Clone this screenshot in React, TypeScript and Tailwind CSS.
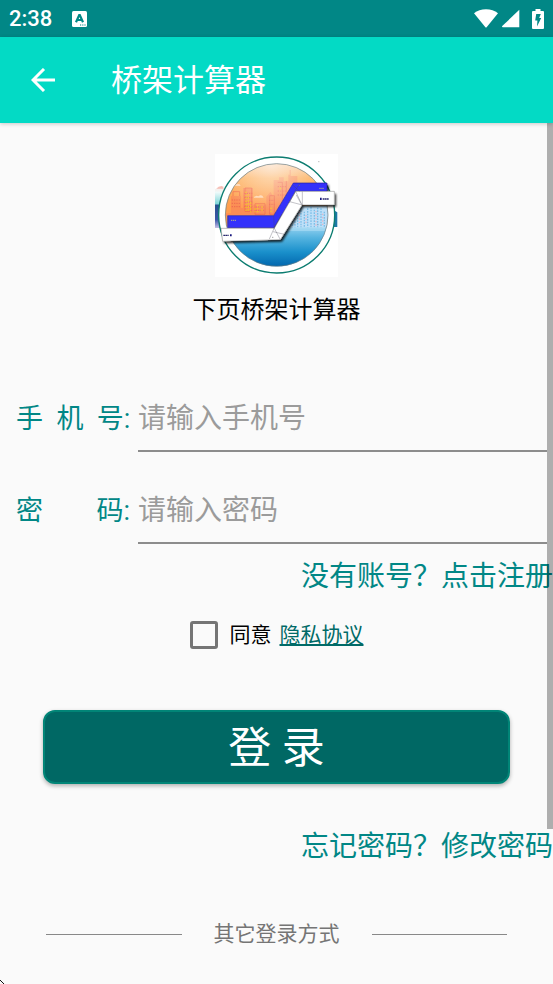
import type { ReactNode } from "react";

type FieldProps = {
  id: string;
  label: string;
  type: string;
  placeholder: string;
};

type TextLinkProps = {
  children: ReactNode;
};

function StatusBar() {
  return (
    <div className="flex h-[37px] items-center bg-[#018786] px-[9px] text-white">
      <span className="text-[22px] leading-none font-medium">2:38</span>
      <svg viewBox="0 0 15 16" className="ml-5 h-4 w-[15px]" aria-hidden="true">
        <rect width="15" height="16" rx="1.5" fill="#fff" />
        <path
          d="M4 11.2 7.2 4h.6l3.2 7.2M5.4 9h4.2"
          fill="none"
          stroke="#018786"
          strokeWidth="2.2"
        />
        <path d="M8 13.6h1.2v1H8zM10.2 13.6h1.2v1h-1.2zM12.4 13.6h1.2v1h-1.2z" fill="#018786" />
      </svg>
      <div className="ml-auto flex items-center">
        <svg viewBox="0 0 24 19" className="h-[19px] w-6" fill="#fff" aria-hidden="true">
          <path d="M0 4.2C3.2 1.6 7.4.3 12 .3s8.8 1.3 12 3.9L12.6 18.2a.8.8 0 0 1-1.2 0Z" />
        </svg>
        <svg viewBox="0 0 18 19" className="ml-1 h-[19px] w-[18px]" fill="#fff" aria-hidden="true">
          <path d="M17.3.8v17.5H.8q-.8 0-.8-1z" />
        </svg>
        <svg viewBox="0 0 12 20" className="ml-3 h-5 w-3" aria-hidden="true">
          <path
            d="M3.5 0h5v2H11a1 1 0 0 1 1 1v16a1 1 0 0 1-1 1H1a1 1 0 0 1-1-1V3a1 1 0 0 1 1-1h2.5z"
            fill="#fff"
          />
          <path d="M4.2 5h4.600L7.200 9h2L5 17.500 5.400 11.500H3.200z" fill="#018786" />
        </svg>
      </div>
    </div>
  );
}

function AppLogo() {
  return (
    <svg viewBox="30 27 369 369" className="h-[123px] w-[123px]" role="img" aria-label="下页桥架计算器">
      <defs>
        <linearGradient id="sky" x1="0" y1="0" x2="0" y2="1">
          <stop offset="0" stopColor="#fbd3b0" />
          <stop offset="0.14" stopColor="#fdb568" />
          <stop offset="0.4" stopColor="#ffa050" />
          <stop offset="0.61" stopColor="#ff9a4a" />
          <stop offset="0.63" stopColor="#8accee" />
          <stop offset="0.72" stopColor="#55b4e0" />
          <stop offset="0.86" stopColor="#1a90cb" />
          <stop offset="1" stopColor="#0267ae" />
        </linearGradient>
        <radialGradient id="shine" cx="0.45" cy="0.02" r="0.5">
          <stop offset="0" stopColor="#fff" stopOpacity="0.55" />
          <stop offset="1" stopColor="#fff" stopOpacity="0" />
        </radialGradient>
        <linearGradient id="edge" x1="0" y1="0" x2="0" y2="1">
          <stop offset="0" stopColor="#f8d8d0" stopOpacity="0.4" />
          <stop offset="0.15" stopColor="#eefafa" />
          <stop offset="0.42" stopColor="#7fd6d8" />
          <stop offset="0.46" stopColor="#28508f" />
          <stop offset="0.8" stopColor="#3a55a8" />
          <stop offset="1" stopColor="#c4bfe6" />
        </linearGradient>
        <clipPath id="disc">
          <circle cx="215" cy="210" r="154" />
        </clipPath>
        <filter id="drop" x="-10%" y="-10%" width="125%" height="130%">
          <feDropShadow dx="5" dy="6" stdDeviation="3" floodOpacity="0.85" />
        </filter>
      </defs>

      <rect x="30" y="27" width="369" height="369" fill="#fff" />

      {/* skyline that shows past the ring on both sides */}
      <path d="M30 132l28-9-8 126H30z" fill="url(#edge)" />
      <path d="M34 131q6-9 18-8l4 8z" fill="#f3a79b" opacity="0.7" />
      <path d="M386 196l11 6v44h-13z" fill="#1d78a5" />
      <circle cx="215" cy="210" r="174" fill="#fff" stroke="#0b7c70" strokeWidth="4" />

      <circle cx="215" cy="210" r="154" fill="url(#sky)" />
      <g clipPath="url(#disc)">
        <path
          d="M62 205h16v-52h30v36h6v-60h30v50h40v-24l12-14 10 14v-50h16v-8h14v12h14v-20h4V75h3v18h20v30h12v90H62z"
          fill="#f87c5a"
          opacity="0.5"
        />
        <path
          d="M84 153V140h20v13M120 129h20v70h-20zM194 152h14v56h-14zM218 112h14v80M244 108v50M150 176h30v32h-30z"
          fill="none"
          stroke="#ee5f48"
          strokeWidth="3"
          opacity="0.6"
        />
        <path
          d="M80 165h26M80 175h26M80 185h26M118 145h24M118 158h24M118 171h24M118 184h24M152 186h26M152 196h26M192 166h16M192 178h16M218 125h26M218 138h26M218 150h26"
          stroke="#e95d4e"
          strokeWidth="3"
          strokeDasharray="4 3"
          opacity="0.7"
        />
        <path
          d="M123 140v62M130 148v54M137 172v30M150 190v12M158 180v22M171 184v16M198 188v14M226 128v10"
          stroke="#f3c51c"
          strokeWidth="4"
          strokeDasharray="4 5"
        />
        <path d="M66 122q4-7 12-5 8-10 17 0 9-3 12 6zM146 158q7-9 14-4 10-8 16 4z" fill="#ffd9b8" opacity="0.9" />
        <path d="M230 182h150v68H230z" fill="#bfe0f8" />
        <path
          d="M262 214v34M270 205v44M278 194v54M288 188v60M298 200v48M308 190v58M318 186v62M328 194v54M338 188v60M348 190v58M358 200v48"
          stroke="#53a9dd"
          strokeWidth="4"
          strokeDasharray="5 3"
          opacity="0.6"
        />
        <path
          d="M283 200v40M303 210v30M333 198v44M353 206v34"
          stroke="#e3b7c8"
          strokeWidth="4"
          strokeDasharray="4 6"
        />
        <path d="M220 246h150v12H220z" fill="#a9dcf3" opacity="0.7" />
      </g>
      <circle cx="215" cy="210" r="154" fill="url(#shine)" />
      <circle cx="215" cy="210" r="154" fill="none" stroke="#667b83" strokeWidth="2" />

      {/* cable tray */}
      <g filter="url(#drop)">
        <path
          d="M68 212H206L265 114H366V140H388V180H291L226 284 53 289 48 250H68z"
          fill="#fff"
        />
      </g>
      <path d="M68 212H206L265 114H366V139H272L208 248H68z" fill="#3432fb" stroke="#25219a" strokeWidth="2" />
      <path
        d="M48 250H208L272 139H388V180H291L226 284 53 289z"
        fill="#fff"
        stroke="#777"
        strokeWidth="1.5"
      />
      <path
        d="M206 212l2 36M208 248l-15 34M207 248l19 36M204 260l34 8M230 208l-22 40M254 170l38 10M272 139l-20 35M272 139l19 41M292 140v40M274 150l14 26M264 121l20 18M285 115l-16 24M69 213l4 35"
        fill="none"
        stroke="#484858"
        strokeWidth="1"
      />
      <path d="M78 226h15M343 130h14" stroke="#b6b989" strokeWidth="3" strokeDasharray="4 2" />
      <path d="M55 271h16M353 162h19" stroke="#28286d" strokeWidth="4" strokeDasharray="5 1" />
      <path d="M75 268h5v6h-5zM345 158h5v7h-5z" fill="#14147d" />
      <path d="M281 121h4M201 277h4M338 239h2M340 50h3" stroke="#777" strokeWidth="2" />
    </svg>
  );
}

function Field({ id, label, type, placeholder }: FieldProps) {
  return (
    <div className="flex h-[68px] items-stretch pr-[6px] pl-4">
      <label
        htmlFor={id}
        className="flex w-[122px] shrink-0 items-center pt-[2px] text-[27px] whitespace-pre text-[#018786]"
      >
        {label}
      </label>
      <input
        id={id}
        type={type}
        placeholder={placeholder}
        className="min-w-0 flex-1 border-b-2 border-[#8c8c8c] bg-transparent pt-1 text-[28px] text-black outline-none placeholder:text-[#9b9b9b]"
      />
    </div>
  );
}

function TextLink({ children }: TextLinkProps) {
  return (
    <a href="#" className="text-[28px] leading-[42px] text-[#018786]">
      {children}
    </a>
  );
}

export default function App() {
  return (
    <div className="relative flex min-h-screen flex-col bg-[#fafafa] font-[Roboto,'Noto_Sans_CJK_SC',sans-serif]">
      <StatusBar />
      <header className="z-10 flex h-[86px] items-center bg-[#03dac5] pl-[31px] text-white shadow-[0_1px_4px_rgba(0,0,0,0.2)]">
        <button type="button" aria-label="返回" className="h-6 w-6">
          <svg viewBox="0 0 24 24" className="h-6 w-6" fill="none" stroke="#fff" strokeWidth="3" aria-hidden="true">
            <path d="M24 12H2M13 1 2 12l11 11" />
          </svg>
        </button>
        <h1 className="ml-14 pt-[2px] text-[31px] leading-10">桥架计算器</h1>
      </header>

      <main className="relative flex flex-1 flex-col pt-[31px]">
        <div className="flex flex-col items-center">
          <AppLogo />
          <p className="mt-[13px] text-[24px] leading-10 text-black">下页桥架计算器</p>
        </div>

        <form className="mt-[54px] flex flex-col">
          <Field id="phone" label="手  机  号:" type="tel" placeholder="请输入手机号" />
          <div className="mt-6">
            <Field id="password" label="密        码:" type="password" placeholder="请输入密码" />
          </div>
          <div className="mt-3 flex justify-end">
            <TextLink>没有账号？点击注册</TextLink>
          </div>

          <div className="mt-[21px] flex items-center justify-center text-[21px] leading-8">
            <input
              id="agree"
              type="checkbox"
              className="h-7 w-7 appearance-none rounded-[3px] border-3 border-[#757575] checked:bg-[#018786]"
            />
            <label htmlFor="agree" className="ml-3 text-black">
              同意
            </label>
            <a href="#" className="ml-2 text-[#006a67] underline underline-offset-2">
              隐私协议
            </a>
          </div>

          <button
            type="submit"
            className="mx-[43px] mt-[59px] h-[74px] rounded-xl border-2 border-[#018577] bg-[#006864] pt-[2px] text-[43px] leading-none text-white shadow-[0_2px_4px_rgba(0,0,0,0.3)]"
          >
            登 录
          </button>
        </form>

        <div className="mt-[42px] flex justify-end">
          <TextLink>忘记密码？修改密码</TextLink>
        </div>

        <div className="mx-[46px] mt-[50px] flex items-center text-[21px] leading-8 text-[#757575]">
          <span className="h-px flex-1 bg-[#888888]" />
          <span className="mx-8">其它登录方式</span>
          <span className="h-px flex-1 bg-[#888888]" />
        </div>

        {/* scroll indicator */}
        <div className="absolute top-0 right-0 h-[82%] w-[6px] bg-black/30" />
      </main>

      <svg viewBox="0 0 4 4" className="absolute bottom-0 left-0 h-1 w-1" aria-hidden="true">
        <path d="M0 0h1v1h1v1h1v1h1v1H3V3H2V2H1V1H0z" fill="#111" />
      </svg>
    </div>
  );
}
